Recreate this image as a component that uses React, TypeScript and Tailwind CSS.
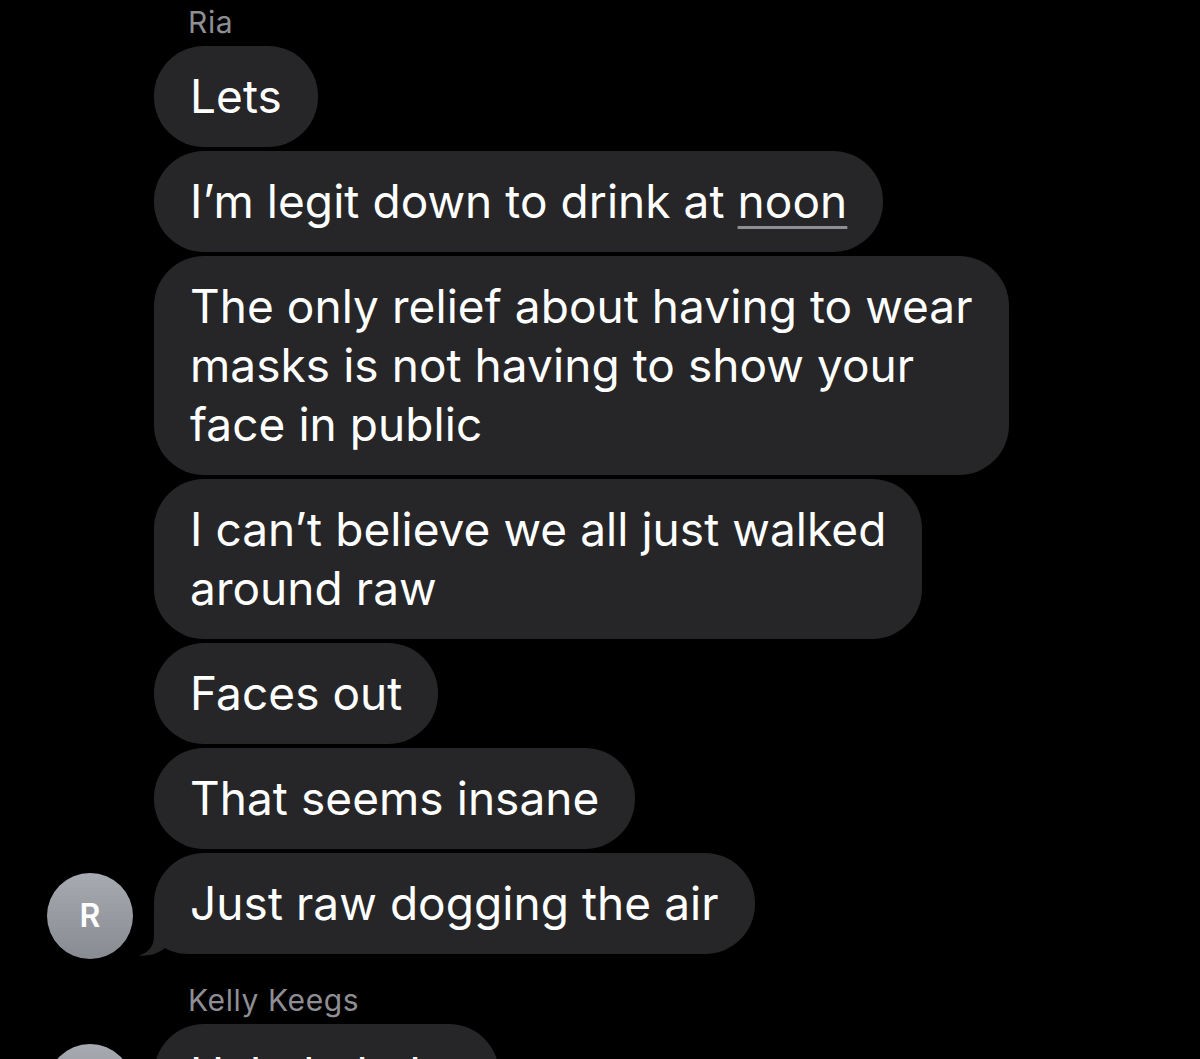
import React from 'react';

type Msg = { text: React.ReactNode };

const riaMessages: Msg[] = [
  { text: 'Lets' },
  {
    text: (
      <>
        I’m legit down to drink at{' '}
        <span className="underline decoration-[#8e8e93] decoration-[3px] underline-offset-[8px]">noon</span>
      </>
    ),
  },
  {
    text: (
      <>
        The only relief about having to wear
        <br />
        masks is not having to show your
        <br />
        face in public
      </>
    ),
  },
  {
    text: (
      <>
        I can’t believe we all just walked
        <br />
        around raw
      </>
    ),
  },
  { text: 'Faces out' },
  { text: 'That seems insane' },
  { text: 'Just raw dogging the air' },
];

function Avatar({ letter }: { letter: string }) {
  return (
    <div className="w-[86px] h-[86px] shrink-0 rounded-full bg-gradient-to-b from-[#a8aab1] to-[#898b92] flex items-center justify-center text-white text-[32px] font-semibold">
      {letter}
    </div>
  );
}

// tail sits behind the bubble's bottom-left corner
function Tail() {
  return (
    <svg className="absolute left-[-16px] bottom-[-2px]" width="70" height="56" viewBox="0 0 70 56">
      <path
        d="M16 0 L16 36 C16 46 11 52 1 55.5 C12 56.5 21 53 27 48 C35 53 44 54 54 54 L70 54 L70 0 Z"
        fill="#262628"
      />
    </svg>
  );
}

function Bubble({ children, tail }: { children: React.ReactNode; tail?: boolean }) {
  return (
    <div className="relative self-start">
      {tail && <Tail />}
      <div className="relative whitespace-nowrap bg-[#262628] rounded-[50px] px-[36px] py-[21px] text-white text-[46px] leading-[59px] tracking-[0.05px]">
        {children}
      </div>
    </div>
  );
}

function Group({ name, letter, messages }: { name: string; letter: string; messages: Msg[] }) {
  return (
    <div className="flex flex-col">
      <div className="pl-[188px] text-[#8e8e93] text-[30px] leading-[36px] h-[42px] tracking-[0.6px]">{name}</div>
      <div className="flex items-end pl-[47px]">
        <div className="mb-[-5px]">
          <Avatar letter={letter} />
        </div>
        <div className="ml-[21px] flex flex-col gap-[4px]">
          {messages.map((m, i) => (
            <Bubble key={i} tail={i === messages.length - 1}>
              {m.text}
            </Bubble>
          ))}
        </div>
      </div>
    </div>
  );
}

export default function App() {
  return (
    <div className="w-[1200px] h-[1059px] overflow-hidden bg-black font-['Inter','Liberation_Sans',sans-serif]">
      <div className="pt-[4px] flex flex-col gap-[28px]">
        <Group name="Ria" letter="R" messages={riaMessages} />
        <Group name="Kelly Keegs" letter="K" messages={[{ text: 'Hahahahaha' }]} />
      </div>
    </div>
  );
}
